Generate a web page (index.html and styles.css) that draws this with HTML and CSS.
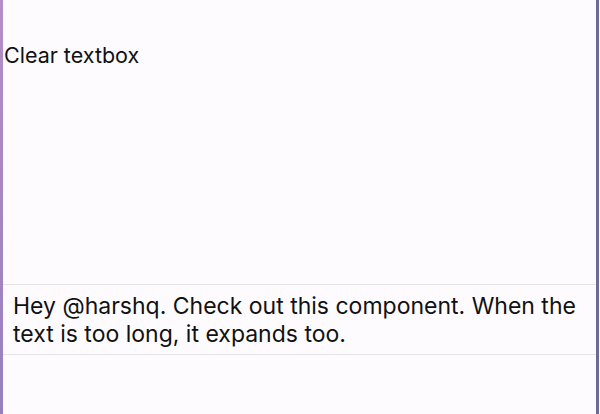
FILE: index.html
```html
<!DOCTYPE html>
<html>
<head>
<meta charset="utf-8">
<link rel="stylesheet" href="styles.css">
</head>
<body>
<div class="frame">
  <div class="app">
    <div class="toolbar">
      <button class="clear">Clear textbox</button>
    </div>
    <div class="spacer"></div>
    <div class="textbox">Hey @harshq. Check out this component. When the text is too long, it expands too.</div>
  </div>
</div>
</body>
</html>
```

FILE: styles.css
```css
html, body {
  margin: 0;
  padding: 0;
  height: 100%;
  background: #fdfbfd;
}
.frame {
  height: 414px;
  box-sizing: border-box;
  padding-left: 3px;
  background: linear-gradient(#b48ec6, #9680be) left top / 3px 100% no-repeat, #fdfbfd;
  border-right: 3px solid #6c6a98;
  margin-right: 1px;
  display: flex;
  flex-direction: column;
}
.app {
  display: flex;
  flex-direction: column;
  flex: 1;
  background: #fdfbfd;
  font-family: Inter, "Liberation Sans", Arial, sans-serif;
  color: #111;
}
.toolbar {
  padding-top: 44px;
  padding-left: 1px;
}
.clear {
  background: none;
  border: none;
  padding: 0;
  margin: 0;
  font-family: Inter, "Liberation Sans", Arial, sans-serif;
  font-size: 21.5px;
  line-height: 23px;
  color: #111;
}
.spacer {
  height: 217px;
}
.textbox {
  border-top: 1px solid #e6e3e8;
  border-bottom: 1px solid #e6e3e8;
  padding: 7px 10px 6px 10px;
  font-size: 23px;
  line-height: 28px;
}
```
